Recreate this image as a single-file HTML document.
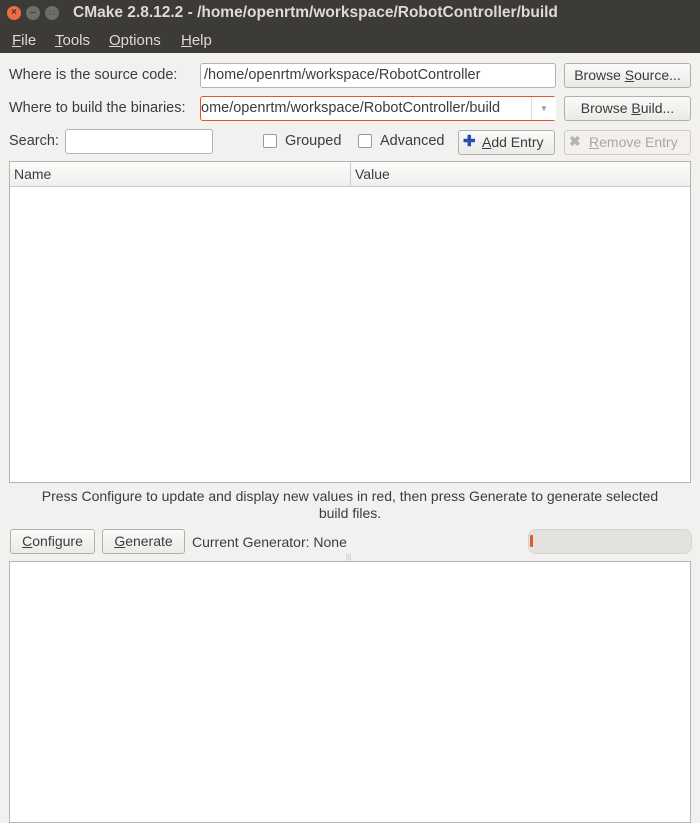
<!DOCTYPE html><html><head><style>
body{margin:0;width:700px;height:812px;background:#f2f1f0;font-family:"Liberation Sans",sans-serif;font-size:14px;color:#3c3c3c;position:relative;overflow:hidden}
.a{position:absolute;white-space:nowrap}
.in{position:absolute;background:#fff;border:1px solid #b6b3ae;border-radius:3px;box-sizing:border-box;height:25px;line-height:23px;padding-left:3px;overflow:hidden;color:#3c3c3c}
.bt{position:absolute;border:1px solid #b3b0ab;border-radius:3px;background:linear-gradient(#fafaf9,#ebeae8);box-sizing:border-box;text-align:center;line-height:23px;height:25px}
.cb{position:absolute;width:12px;height:12px;border:1px solid #9c9994;border-radius:2px;background:#fff}
u{text-decoration:underline}
.wb{position:absolute;top:6px;width:14px;height:14px;border-radius:50%;text-align:center;line-height:14px;font-size:10px;font-weight:bold;color:#3c3b37}
</style></head><body>
<div class="a" style="left:0;top:0;width:700px;height:53px;background:#3c3b37"></div>
<div class="wb" style="left:7px;background:#ef6c43">×</div>
<div class="wb" style="left:26px;background:#6e6d69">–</div>
<div class="wb" style="left:45px;background:#6e6d69;font-size:8px">□</div>
<div class="a" style="left:73px;top:4px;color:#dfdbd2;font-weight:bold;font-size:15.5px">CMake 2.8.12.2 - /home/openrtm/workspace/RobotController/build</div>
<div class="a" style="left:12px;top:32px;color:#dfdbd2;font-size:15px"><u>F</u>ile</div>
<div class="a" style="left:55px;top:32px;color:#dfdbd2;font-size:15px"><u>T</u>ools</div>
<div class="a" style="left:109px;top:32px;color:#dfdbd2;font-size:15px"><u>O</u>ptions</div>
<div class="a" style="left:181px;top:32px;color:#dfdbd2;font-size:15px"><u>H</u>elp</div>
<div class="a" style="left:9px;top:67px;font-size:14.5px">Where is the source code:</div>
<div class="in" style="left:200px;top:63px;width:356px;font-size:14.5px">/home/openrtm/workspace/RobotController</div>
<div class="bt" style="left:564px;top:63px;width:127px">Browse <u>S</u>ource...</div>
<div class="a" style="left:9px;top:100px;font-size:14.5px">Where to build the binaries:</div>
<div class="in" style="left:200px;top:96px;width:356px;border-color:#e0592a;padding-left:0;font-size:14.5px">ome/openrtm/workspace/RobotController/build</div>
<div class="a" style="left:531px;top:97px;width:24px;height:23px;background:#fff;border-left:1px solid #ddd;color:#999;text-align:center;line-height:24px;font-size:8px">▼</div>
<div class="bt" style="left:564px;top:96px;width:127px">Browse <u>B</u>uild...</div>
<div class="a" style="left:9px;top:133px;font-size:14.5px">Search:</div>
<div class="in" style="left:65px;top:129px;width:148px"></div>
<div class="cb" style="left:263px;top:134px"></div><div class="a" style="left:285px;top:133px;font-size:14.5px">Grouped</div>
<div class="cb" style="left:358px;top:134px"></div><div class="a" style="left:380px;top:133px;font-size:14.5px">Advanced</div>
<div class="bt" style="left:458px;top:130px;width:97px;text-align:left;padding-left:23px"><u>A</u>dd Entry</div>
<div class="a" style="left:463px;top:135px;color:#2a4fb0;font-weight:bold;font-size:15px;line-height:14px">✚</div>
<div class="bt" style="left:564px;top:130px;width:127px;color:#a8a6a2;text-align:left;padding-left:24px;background:#f2f1f0;border-color:#d0cdc9"><u>R</u>emove Entry</div>
<div class="a" style="left:569px;top:133px;color:#b5b3af;font-weight:bold">✖</div>
<div class="a" style="left:9px;top:161px;width:680px;height:320px;background:#fff;border:1px solid #b6b3ae"></div>
<div class="a" style="left:10px;top:162px;width:680px;height:24px;background:linear-gradient(#fbfbfa,#f0efee);border-bottom:1px solid #ccc"></div>
<div class="a" style="left:350px;top:162px;width:1px;height:24px;background:#ccc"></div>
<div class="a" style="left:14px;top:166px">Name</div>
<div class="a" style="left:355px;top:166px">Value</div>
<div class="a" style="left:0;top:488px;width:700px;text-align:center;white-space:normal;line-height:17px;font-size:14px">Press Configure to update and display new values in red, then press Generate to generate selected<br>build files.</div>
<div class="bt" style="left:10px;top:529px;width:85px"><u>C</u>onfigure</div>
<div class="bt" style="left:102px;top:529px;width:83px"><u>G</u>enerate</div>
<div class="a" style="left:192px;top:534px">Current Generator: None</div>
<div class="a" style="left:528px;top:529px;width:162px;height:23px;border:1px solid #d6d4d0;border-radius:8px;background:#e3e2df"></div>
<div class="a" style="left:530px;top:535px;width:3px;height:12px;background:#e0592a;border-radius:1px"></div>
<div class="a" style="left:346px;top:554px;color:#bbb;font-size:7px">|||</div>
<div class="a" style="left:9px;top:561px;width:680px;height:260px;background:#fff;border:1px solid #b6b3ae"></div>
</body></html>
